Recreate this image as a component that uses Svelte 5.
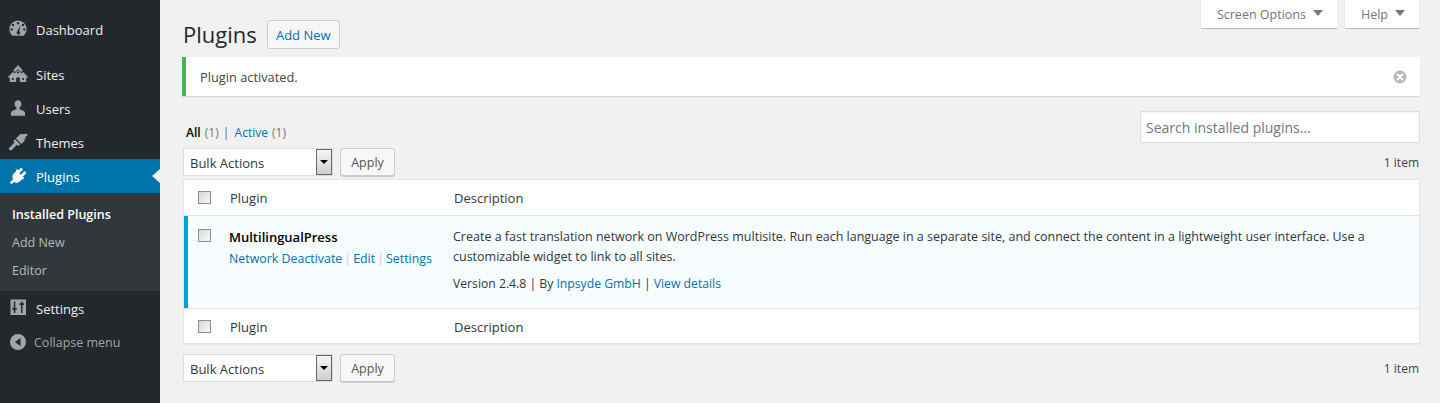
<script>
	const menuTop = [
		{ label: 'Sites', icon: 'sites' },
		{ label: 'Users', icon: 'users' },
		{ label: 'Themes', icon: 'themes' }
	];
	const columns = ['Plugin', 'Description'];
</script>

{#snippet menuIcon(name)}
	<svg class="icon" viewBox="0 0 20 20" aria-hidden="true">
		{#if name === 'dashboard'}
			<path fill-rule="evenodd" d="M10 1.500a8.600 8.600 0 0 0-8.600 8.600c0 2.700 1.200 5 3.100 6.600h11c1.900-1.600 3.100-3.900 3.100-6.600A8.600 8.600 0 0 0 10 1.500zM10 3a1.200 1.200 0 1 1 0 2.400A1.200 1.200 0 0 1 10 3zM5 4.800A1.200 1.200 0 1 1 5 7.200a1.200 1.200 0 0 1 0-2.400zm10 0a1.200 1.200 0 1 1 0 2.400 1.200 1.200 0 0 1 0-2.400zM3.700 9.300a1.200 1.200 0 1 1 0 2.400 1.200 1.200 0 0 1 0-2.400zm12.600 0a1.200 1.200 0 1 1 0 2.400 1.200 1.200 0 0 1 0-2.400zM12.600 6l-1.300 6.200a1.800 1.800 0 1 1-2.100.2z" />
		{:else if name === 'sites'}
			<path fill-rule="evenodd" d="M10 1 5.200 6.400 7 8l3-3 3 3 1.800-1.600zM10 6 6.800 9.200 4.900 8 0 13l1 .9.800-.6V18h6.400v-4.700l.6.6 1.200-1 1.200 1 .6-.6V18h6.400v-4.700l.8.600 1-.9-4.900-5-1.900 1.200zM10 7.600a1 1 0 1 1 0 2 1 1 0 0 1 0-2zM4 14h1.600v2H4zm10.400 0H16v2h-1.600z" />
		{:else if name === 'users'}
			<path d="M10 2.200c-2 0-3.400 1.700-3.400 3.900 0 1.600.8 3 1.900 3.700v1.300l-3.300 1.400C3.900 13 3 13.900 3 15.200v2.600h14v-2.600c0-1.300-.9-2.200-2.200-2.600l-3.300-1.400V9.800c1.100-.7 1.900-2.100 1.900-3.700 0-2.200-1.400-3.900-3.400-3.900z" />
		{:else if name === 'themes'}
			<path d="M19.500 1.800 12.100 2.200 7.900 6.400l5.500 5.500 3.500-3.500-.7-1.600 1.900-.6-.7-1.700 1.900-.6zM7 7.300 5.800 8.500c-.4.400-.4 1 0 1.400l.7.7-5 4.800c-.8.800-.8 2 0 2.600s1.800.6 2.600-.2l4.800-5 .7.7c.4.400 1 .4 1.400 0l1.200-1.200z" />
		{:else if name === 'plugins'}
			<path d="M13 1.600l2 2-3.600 3.600 1.500 1.500 3.600-3.600 2 2-3.600 3.600 1.300 1.300-1.400 1.400-.5-.5-2.500 2.500c-1.600 1.600-3.900 1.800-5.700.6L3.500 18.200 1.800 16.500l3.400-3.400c-1.200-1.800-1-4.100.6-5.700l2.500-2.500-.5-.5L9.200 3l1.300 1.300z" />
		{:else if name === 'settings'}
			<path fill-rule="evenodd" d="M2.500 1.500h15.500v15.500H2.500zM5.800 3.500v6.600H4.300v1.600h1.500V15h1.500v-3.300h1.500v-1.600H7.300V3.500zM13 3.500v1.800h-1.500v1.600H13V15h1.500V6.900H16V5.300h-1.500V3.500z" />
		{/if}
	</svg>
{/snippet}

{#snippet tablenav()}
	<div class="tablenav">
		<div class="fake-select">
			<span class="select-label">Bulk Actions</span>
			<span class="select-arrow"></span>
		</div>
		<button class="btn">Apply</button>
		<span class="count">1 item</span>
	</div>
{/snippet}

{#snippet headRow(cls)}
	<div class="row head {cls}">
		<div class="check"><span class="box"></span></div>
		<div class="col-name">{columns[0]}</div>
		<div class="col-desc">{columns[1]}</div>
	</div>
{/snippet}

<div class="layout">
	<nav class="sidebar">
		<a class="item">{@render menuIcon('dashboard')}<span>Dashboard</span></a>
		<div class="sep"></div>
		{#each menuTop as m}
			<a class="item">{@render menuIcon(m.icon)}<span>{m.label}</span></a>
		{/each}
		<a class="item current">{@render menuIcon('plugins')}<span>Plugins</span><i class="pointer"></i></a>
		<div class="submenu">
			<a class="on">Installed Plugins</a>
			<a>Add New</a>
			<a>Editor</a>
		</div>
		<a class="item">{@render menuIcon('settings')}<span>Settings</span></a>
		<a class="collapse">
			<svg class="collapse-icon" viewBox="0 0 16 16" aria-hidden="true">
				<path fill-rule="evenodd" d="M8 0a8 8 0 1 1 0 16A8 8 0 0 1 8 0zm2.500 4L5 8l5.500 4z" />
			</svg>
			<span>Collapse menu</span>
		</a>
	</nav>

	<main class="content">
		<div class="tabs">
			<div class="tab">Screen Options<i class="caret"></i></div>
			<div class="tab">Help<i class="caret"></i></div>
		</div>

		<div class="title-row">
			<h1>Plugins</h1>
			<button class="btn add">Add New</button>
		</div>

		<div class="notice">
			<p>Plugin <span class="medium">activated.</span></p>
			<svg class="dismiss" viewBox="0 0 14 14" aria-hidden="true">
				<path fill-rule="evenodd" d="M7 .5a6.500 6.500 0 1 1 0 13 6.500 6.500 0 0 1 0-13zM4.600 3.200 3.200 4.600 5.600 7 3.200 9.400l1.400 1.400L7 8.400l2.400 2.400 1.400-1.400L8.400 7l2.400-2.400-1.400-1.400L7 5.600z" />
			</svg>
		</div>

		<div class="filter-row">
			<div class="subsub">
				<b>All</b> <span class="num">(1)</span>
				<span class="pipe">|</span>
				<a>Active</a> <span class="num">(1)</span>
			</div>
			<div class="search">Search installed plugins...</div>
		</div>

		{@render tablenav()}

		<div class="table">
			{@render headRow('top')}
			<div class="row plugin">
				<div class="check"><span class="box"></span></div>
				<div class="col-name">
					<strong>MultilingualPress</strong>
					<div class="actions">
						<a>Network Deactivate</a><span class="bar">|</span><a>Edit</a><span class="bar">|</span><a>Settings</a>
					</div>
				</div>
				<div class="col-desc">
					<p>Create a fast translation network on WordPress multisite. Run each language in a separate site, and connect the content in a lightweight user interface. Use a customizable widget to link to all sites.</p>
					<p class="meta">Version 2.4.8 | By <a>Inpsyde GmbH</a> | <a>View details</a></p>
				</div>
			</div>
			{@render headRow('foot')}
		</div>

		<div class="bottom-nav">{@render tablenav()}</div>
	</main>
</div>

<style>
	:global(body) {
		margin: 0;
		background: #f1f1f1;
		font-family: 'Open Sans', 'Noto Sans', sans-serif;
		font-size: 13px;
		line-height: 1.4;
		color: #444;
	}

	.layout {
		display: flex;
		height: 403px;
		overflow: hidden;
	}

	.sidebar {
		width: 160px;
		flex: none;
		background: #23282d;
		color: #eee;
		font-size: 13px;
		padding-top: 12px;
	}

	.item {
		display: flex;
		align-items: center;
		position: relative;
		height: 34px;
		padding-left: 8px;
		box-sizing: border-box;
	}

	.item span {
		margin-left: 8px;
		position: relative;
		top: 1px;
	}

	.sep {
		height: 11px;
	}

	.icon {
		width: 20px;
		height: 20px;
		fill: #a0a5aa;
		flex: none;
	}

	.current {
		background: #0073aa;
		color: #fff;
	}

	.current .icon {
		fill: #fff;
	}

	.pointer {
		position: absolute;
		right: 0;
		top: 10px;
		border: 8px solid transparent;
		border-right-color: #f1f1f1;
		border-left-width: 0;
		border-top-width: 7px;
		border-bottom-width: 7px;
	}

	.submenu {
		background: #32373c;
		padding: 8px 0 6px;
		font-size: 12.5px;
		color: #b4b9be;
	}

	.submenu a {
		display: block;
		height: 28px;
		line-height: 28px;
		padding-left: 12px;
	}

	.submenu .on {
		color: #fff;
		font-weight: 600;
	}

	.collapse {
		display: flex;
		align-items: center;
		height: 34px;
		padding-left: 10px;
		color: #a0a5aa;
		font-size: 12.5px;
	}

	.collapse span {
		margin-left: 8px;
		padding-top: 2px;
	}

	.collapse-icon {
		width: 16px;
		height: 16px;
		fill: #a0a5aa;
	}

	.content {
		flex: 1;
		min-width: 0;
		padding: 0 20px 0 23px;
		position: relative;
	}

	.tabs {
		position: absolute;
		top: 0;
		right: 21px;
		display: flex;
		gap: 8px;
	}

	.tab {
		height: 28px;
		padding: 2px 14px 0 16px;
		box-sizing: border-box;
		background: #fff;
		color: #72777c;
		font-size: 12.5px;
		box-shadow: 0 1px 1px rgba(0, 0, 0, 0.2);
		display: flex;
		align-items: center;
	}

	.caret {
		display: block;
		margin-left: 7px;
		margin-top: -5px;
		border: 5px solid transparent;
		border-top: 6px solid #72777c;
		border-bottom: 0;
	}

	.title-row {
		display: flex;
		align-items: center;
		padding-top: 20px;
		height: 29px;
	}

	h1 {
		margin: 0;
		font-size: 22px;
		font-weight: 400;
		line-height: 31px;
		color: #23282d;
	}

	.btn {
		font: inherit;
		font-size: 12.5px;
		height: 28px;
		width: 55px;
		padding: 2px 0 0;
		background: #f7f7f7;
		color: #555;
		border: 1px solid #ccc;
		border-radius: 3px;
		box-shadow: 0 1px 0 #ccc;
		box-sizing: border-box;
	}

	.add {
		margin-left: 10px;
		height: 29px;
		width: 73px;
		font-size: 13px;
		font-weight: 500;
		color: #0073aa;
		box-shadow: none;
	}

	.notice {
		display: flex;
		align-items: center;
		justify-content: space-between;
		margin: 8px 0 0 -1px;
		height: 39px;
		background: #fff;
		border-left: 4px solid #46b450;
		box-shadow: 0 1px 1px rgba(0, 0, 0, 0.1);
		box-sizing: border-box;
		padding: 0 13px 0 14px;
	}

	.notice p {
		margin: 0;
		padding-top: 2px;
		font-size: 12.8px;
	}

	.medium {
		font-weight: 500;
	}

	.dismiss {
		width: 14px;
		height: 14px;
		fill: #b4b9be;
	}

	.filter-row {
		display: flex;
		justify-content: space-between;
		align-items: flex-start;
		margin-top: 15px;
		height: 37px;
	}

	.subsub {
		margin: 13px 0 0 3px;
		font-size: 12px;
		line-height: 18px;
		color: #72777c;
		word-spacing: 1px;
	}

	.subsub b {
		color: #000;
		font-weight: 600;
	}

	.subsub a,
	.actions a,
	.meta a {
		color: #0073aa;
	}

	.pipe {
		color: #666;
		margin: 0 1px 0 0;
	}

	.search {
		width: 280px;
		height: 32px;
		line-height: 31px;
		background: #fff;
		border: 1px solid #ddd;
		box-sizing: border-box;
		padding-left: 5px;
		font-size: 14px;
		color: #72777c;
		box-shadow: inset 0 1px 2px rgba(0, 0, 0, 0.04);
	}

	.tablenav {
		display: flex;
		align-items: center;
		height: 28px;
		gap: 7px;
	}

	.fake-select {
		display: flex;
		width: 150px;
		height: 28px;
		background: #fff;
		border: 1px solid #ddd;
		box-sizing: border-box;
		align-items: stretch;
		justify-content: space-between;
	}

	.select-label {
		padding-left: 6px;
		line-height: 28px;
		font-size: 13px;
		color: #32373c;
	}

	.select-arrow {
		width: 16px;
		border: 1px solid #666;
		background: linear-gradient(#f6f6f6, #cfcfcf);
		box-sizing: border-box;
		position: relative;
	}

	.select-arrow::after {
		content: '';
		position: absolute;
		left: 3px;
		top: 10px;
		border: 4px solid transparent;
		border-top: 4px solid #000;
		border-bottom: 0;
	}

	.count {
		margin-left: auto;
		padding-top: 2px;
		padding-right: 1px;
		font-size: 12px;
		color: #444;
	}

	.table {
		margin-top: 3px;
		background: #fff;
		border: 1px solid #e5e5e5;
		box-shadow: 0 1px 1px rgba(0, 0, 0, 0.04);
	}

	.row {
		display: flex;
	}

	.head {
		height: 35px;
		align-items: center;
		font-size: 13px;
		color: #32373c;
	}

	.head .col-name,
	.head .col-desc {
		padding-top: 2px;
	}

	.head.foot {
		height: 34px;
	}

	.head.foot .check {
		padding-top: 1px;
	}

	.check {
		width: 46px;
		flex: none;
		padding-left: 14px;
		box-sizing: border-box;
		line-height: 0;
	}

	.box {
		display: inline-block;
		width: 13px;
		height: 13px;
		box-sizing: border-box;
		border: 1px solid #8f8f8f;
		background: linear-gradient(135deg, #d8d8d8, #f8f8f8);
	}

	.col-name {
		width: 224px;
		flex: none;
	}

	.col-desc {
		flex: 1;
		min-width: 0;
		padding-right: 40px;
	}

	.plugin {
		height: 94px;
		box-sizing: border-box;
		background: #f7fcfe;
		border-top: 1px solid #e1e1e1;
		border-bottom: 1px solid #e1e1e1;
		box-shadow: inset 4px 0 0 #00a0d2;
		color: #32373c;
		font-size: 12.5px;
	}

	.plugin .check {
		padding-top: 13px;
	}

	.plugin .col-name {
		padding-top: 11px;
		margin-left: -1px;
	}

	.plugin .col-desc {
		padding-top: 11px;
	}

	.plugin strong {
		display: block;
		color: #000;
		font-weight: 600;
		font-size: 13px;
		line-height: 20px;
	}

	.actions {
		margin-top: 2px;
		line-height: 20px;
		font-size: 12.4px;
	}

	.bar {
		color: #ccc;
		margin: 0 2px;
	}

	.col-desc p {
		margin: 0;
		line-height: 20px;
	}

	.col-desc .meta {
		margin-top: 7px;
		font-size: 12.2px;
	}

	.bottom-nav {
		margin-top: 10px;
	}
</style>
